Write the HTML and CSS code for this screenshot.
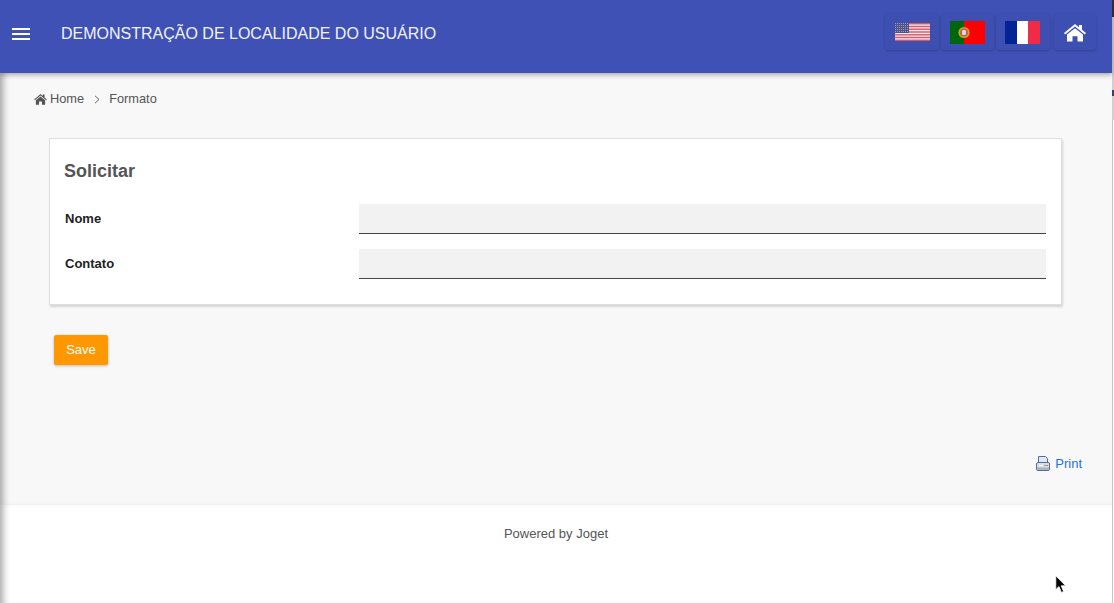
FILE: index.html
```html
<!DOCTYPE html>
<html lang="pt">
<head>
<meta charset="utf-8">
<title>Demonstração de localidade do usuário</title>
<link rel="stylesheet" href="styles.css">
</head>
<body>
<div class="page">
  <header class="topbar">
    <button class="burger" aria-label="Menu"><span></span><span></span><span></span></button>
    <div class="brand">DEMONSTRAÇÃO DE LOCALIDADE DO USUÁRIO</div>
    <nav class="actions">
      <a class="action flag-us-btn" href="#">
        <svg class="flag" width="35" height="18" viewBox="0 0 35 18">
          <defs>
            <pattern id="stars" width="2" height="2" patternUnits="userSpaceOnUse">
              <rect width="2" height="2" fill="#4d5288"/>
              <rect width="1" height="1" fill="#9a9cc0"/>
            </pattern>
          </defs>
          <rect width="35" height="18" fill="#f2e6ea"/>
          <g fill="#d4596a">
            <rect y="0" width="35" height="1.4"/><rect y="2.8" width="35" height="1.4"/><rect y="5.5" width="35" height="1.4"/><rect y="8.3" width="35" height="1.4"/><rect y="11.1" width="35" height="1.4"/><rect y="13.8" width="35" height="1.4"/><rect y="16.6" width="35" height="1.4"/>
          </g>
          <rect width="14" height="10" fill="url(#stars)"/>
        </svg>
      </a>
      <a class="action flag-pt-btn" href="#">
        <svg class="flag" width="35" height="23" viewBox="0 0 35 23">
          <rect width="35" height="23" fill="#f00"/>
          <rect width="14" height="23" fill="#00660a"/>
          <circle cx="14" cy="11.5" r="5.6" fill="#c9a62c"/>
          <circle cx="14" cy="11.5" r="3.9" fill="#c9593f"/>
          <rect x="12" y="9" width="4" height="5" rx="1" fill="#cfd8ea"/>
        </svg>
      </a>
      <a class="action flag-fr-btn" href="#">
        <svg class="flag" width="35" height="23" viewBox="0 0 35 23">
          <rect width="35" height="23" fill="#fff"/>
          <rect width="12" height="23" fill="#002395"/>
          <rect x="23" width="12" height="23" fill="#ef2b45"/>
        </svg>
      </a>
      <a class="action home-btn" href="#">
        <svg width="22" height="18" viewBox="0 0 22 19" preserveAspectRatio="none">
          <path fill="#fff" d="M11 0 L15 3.4 V1 H18 V6 L22 9.6 L20.8 11 L11 2.7 L1.2 11 L0 9.6 Z"/>
          <path fill="#fff" d="M11 4.4 L19 11 V18.5 H13.5 V13 H8.5 V18.5 H3 V11 Z"/>
        </svg>
      </a>
    </nav>
  </header>
  <main class="content">
    <div class="crumbs">
      <svg class="crumb-home" width="13" height="11" viewBox="0 0 22 19">
        <path fill="#555" d="M11 0 L15 3.4 V1 H18 V6 L22 9.6 L20.8 11 L11 2.7 L1.2 11 L0 9.6 Z"/>
        <path fill="#555" d="M11 4.4 L19 11 V18.5 H13.5 V13 H8.5 V18.5 H3 V11 Z"/>
      </svg>
      <a href="#">Home</a>
      <svg class="crumb-sep" width="6" height="9" viewBox="0 0 6 9"><path d="M1 .8 L5 4.5 L1 8.2" fill="none" stroke="#666" stroke-width="1"/></svg>
      <a href="#">Formato</a>
    </div>
    <section class="card">
      <h2 class="card-title">Solicitar</h2>
      <div class="field">
        <label class="field-label">Nome</label>
        <div class="field-input"></div>
      </div>
      <div class="field">
        <label class="field-label">Contato</label>
        <div class="field-input"></div>
      </div>
    </section>
    <button class="save">Save</button>
    <div class="print-row">
      <a class="print" href="#">
        <svg class="print-icon" width="14" height="15" viewBox="0 0 14 15">
          <path d="M2.5 .5 H9.5 L11.5 2.5 V8 H2.5 Z" fill="#dbe8f8" stroke="#55708f"/>
          <rect x=".5" y="6.5" width="13" height="8" rx="1.5" fill="#d5dde6" stroke="#55708f"/>
          <rect x="1" y="11.5" width="12" height="2.5" fill="#aab4c0"/>
          <rect x="3" y="9" width="4" height="1" fill="#fff"/>
          <rect x="8.5" y="9" width="1.5" height="1" fill="#6aa84f"/>
          <rect x="10.5" y="9" width="1.5" height="1" fill="#d9534f"/>
        </svg>
        <span>Print</span>
      </a>
    </div>
  </main>
  <footer class="foot">Powered by Joget</footer>
</div>
<div class="edge"></div>
<svg class="cursor" width="12" height="19" viewBox="0 0 12 19">
  <path d="M.8 .8 V14.6 L4 11.6 L6.4 17.4 L8.6 16.4 L6.2 10.8 H10.6 Z" fill="#000" stroke="#fff" stroke-width=".8"/>
</svg>
</body>
</html>
```
FILE: styles.css
```css
* { box-sizing: border-box; }
html, body { margin: 0; height: 100%; background: #fff; }
body {
  font-family: "Liberation Sans", Arial, sans-serif;
  overflow: hidden;
  position: relative;
}
.page {
  width: 1113px;
  height: 603px;
  display: flex;
  flex-direction: column;
  border-right: 1px solid #c4c4c4;
}
.topbar {
  flex: 0 0 73px;
  display: flex;
  align-items: center;
  background: #3f51b5;
  box-shadow: 0 2px 5px rgba(0,0,0,.3);
  position: relative;
  z-index: 2;
  padding: 0 16px 6px 12px;
}
.burger {
  width: 18px;
  height: 12px;
  padding: 0;
  margin: 1px 0 0;
  border: 0;
  background: none;
  display: flex;
  flex-direction: column;
  justify-content: space-between;
}
.burger span { display: block; height: 2px; background: #fff; }
.brand {
  margin-left: 31px;
  color: #f2f3fa;
  font-size: 16px;
  line-height: 20px;
  white-space: nowrap;
}
.actions {
  margin-left: auto;
  align-self: flex-start;
  margin-top: 14px;
  display: flex;
  gap: 2px;
}
.action {
  height: 36px;
  width: 54px;
  display: flex;
  align-items: center;
  justify-content: center;
  background: #3d4fb1;
  border-radius: 4px;
  box-shadow: 0 1px 3px rgba(0,0,0,.2);
}
.flag-pt-btn { width: 53px; }
.flag-fr-btn { padding-right: 1px; }
.home-btn { width: 42px; margin-left: 2px; }
.home-btn svg { margin-top: 1px; }
.content {
  flex: 1 1 auto;
  background: #f8f8f8;
  box-shadow: inset 8px 0 7px -5px rgba(0,0,0,.35);
  padding: 18px 50px 0 49px;
  display: flex;
  flex-direction: column;
}
.crumbs {
  margin-left: -15px;
  display: flex;
  align-items: center;
  font-size: 12.8px;
  line-height: 16px;
  color: #555;
  height: 16px;
}
.crumbs a { color: #555; text-decoration: none; }
.crumb-home { margin-right: 3px; }
.crumb-sep { margin: 0 9px 0 10px; }
.card {
  margin-top: 31px;
  width: 1013px;
  height: 167px;
  background: #fff;
  border: 1px solid #dedede;
  box-shadow: 1px 2px 2px rgba(0,0,0,.14);
  padding: 22px 15px 0 14px;
}
.card-title {
  margin: 0 0 22px;
  font-size: 18px;
  line-height: 21px;
  font-weight: bold;
  color: #555;
}
.field {
  display: flex;
  height: 30px;
  margin-bottom: 15px;
}
.field-label {
  width: 295px;
  padding: 0 0 0 1px;
  font-size: 13px;
  font-weight: bold;
  line-height: 29px;
  color: #222;
}
.field-input {
  flex: 1;
  background: #f2f2f2;
  border-bottom: 1px solid #444;
}
.save {
  margin: 30px 0 0 5px;
  width: 54px;
  height: 30px;
  padding: 0 0 2px;
  border: 0;
  border-radius: 2px;
  background: #ff9800;
  color: #fff;
  font: 13px "Liberation Sans", Arial, sans-serif;
  box-shadow: 0 1px 3px rgba(0,0,0,.25);
}
.print-row {
  margin-top: 91px;
  display: flex;
  justify-content: flex-end;
}
.print {
  display: flex;
  align-items: center;
  gap: 5px;
  font-size: 13px;
  line-height: 16px;
  color: #1a73e8;
  text-decoration: none;
  margin-right: -20px;
}
.print-icon { margin-top: -1px; }
.foot {
  flex: 0 0 98px;
  background: #fff;
  box-shadow: inset 8px 0 7px -5px rgba(0,0,0,.35);
  text-align: center;
  font-size: 13px;
  line-height: 16px;
  color: #555;
  padding-top: 21px;
}
.edge {
  position: absolute;
  right: 0;
  top: 0;
  width: 2px;
  height: 120px;
  background: linear-gradient(#333 0 17px, #d0d0d0 17px 90px, #3a3a80 90px 96px, #d0d0d0 96px);
}
.cursor {
  position: absolute;
  left: 1055px;
  top: 575px;
}
```
